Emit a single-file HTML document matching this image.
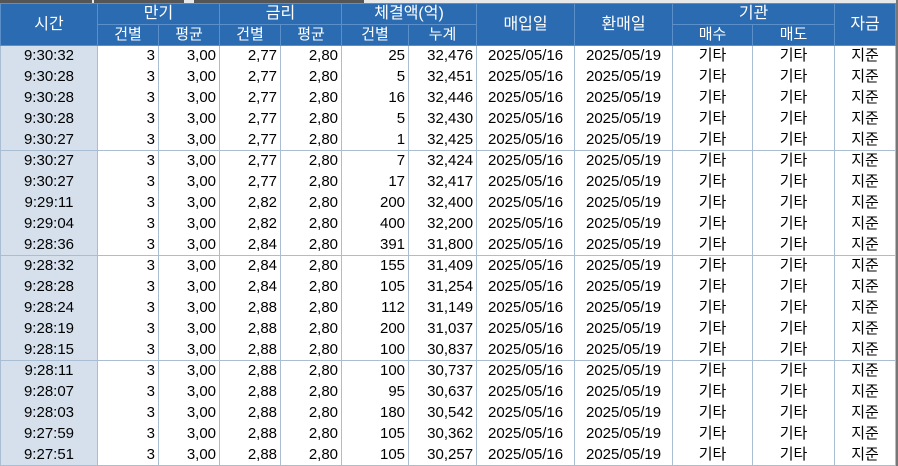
<!DOCTYPE html>
<html><head><meta charset="utf-8"><style>
*{margin:0;padding:0;box-sizing:border-box}
body{width:898px;height:466px;overflow:hidden;background:#fff;font-family:"Liberation Sans","Noto Sans CJK KR",sans-serif;font-size:15px;color:#000;position:relative}
.tabs{position:absolute;top:0;left:0;width:898px;height:3px;background:#e8e8e8}
.tabs span{position:absolute;top:0;height:3px;background:#555}
table{position:absolute;top:3px;left:0;border-collapse:collapse;table-layout:fixed;width:895px}
td,th{overflow:hidden;white-space:nowrap;line-height:20px;height:21px;padding:0 3px}
th{background:#2b6bb1;color:#fff;font-weight:normal;border:1px solid #5a8fca;font-size:15px;height:20px}
th.big{font-size:16px}
td{border-left:1px solid #a9bdd3;border-right:1px solid #a9bdd3;text-align:right}
td.t{background:#d5e0ec;text-align:center}
td.c{text-align:center}
tr.sep td{border-bottom:1px solid #a9bdd3}
.edge{position:absolute;right:0;top:0;width:2px;height:466px;background:#777}
</style></head><body>
<div class="tabs"><span style="left:0;width:92px"></span><span style="left:94px;width:90px"></span><span style="left:194px;width:170px"></span></div>
<table>
<colgroup><col style="width:97px"><col style="width:61px"><col style="width:61px"><col style="width:61px"><col style="width:61px"><col style="width:67px"><col style="width:68px"><col style="width:98px"><col style="width:98px"><col style="width:80px"><col style="width:82px"><col style="width:61px"></colgroup>
<tr><th rowspan="2" class="big">시간</th><th colspan="2" class="big">만기</th><th colspan="2" class="big">금리</th><th colspan="2" class="big">체결액(억)</th><th rowspan="2" class="big">매입일</th><th rowspan="2" class="big">환매일</th><th colspan="2" class="big">기관</th><th rowspan="2" class="big">자금</th></tr>
<tr><th>건별</th><th>평균</th><th>건별</th><th>평균</th><th>건별</th><th>누계</th><th>매수</th><th>매도</th></tr>
<tr><td class="t">9:30:32</td><td>3</td><td>3,00</td><td>2,77</td><td>2,80</td><td>25</td><td>32,476</td><td class="c">2025/05/16</td><td class="c">2025/05/19</td><td class="c">기타</td><td class="c">기타</td><td class="c">지준</td></tr>
<tr><td class="t">9:30:28</td><td>3</td><td>3,00</td><td>2,77</td><td>2,80</td><td>5</td><td>32,451</td><td class="c">2025/05/16</td><td class="c">2025/05/19</td><td class="c">기타</td><td class="c">기타</td><td class="c">지준</td></tr>
<tr><td class="t">9:30:28</td><td>3</td><td>3,00</td><td>2,77</td><td>2,80</td><td>16</td><td>32,446</td><td class="c">2025/05/16</td><td class="c">2025/05/19</td><td class="c">기타</td><td class="c">기타</td><td class="c">지준</td></tr>
<tr><td class="t">9:30:28</td><td>3</td><td>3,00</td><td>2,77</td><td>2,80</td><td>5</td><td>32,430</td><td class="c">2025/05/16</td><td class="c">2025/05/19</td><td class="c">기타</td><td class="c">기타</td><td class="c">지준</td></tr>
<tr class="sep"><td class="t">9:30:27</td><td>3</td><td>3,00</td><td>2,77</td><td>2,80</td><td>1</td><td>32,425</td><td class="c">2025/05/16</td><td class="c">2025/05/19</td><td class="c">기타</td><td class="c">기타</td><td class="c">지준</td></tr>
<tr><td class="t">9:30:27</td><td>3</td><td>3,00</td><td>2,77</td><td>2,80</td><td>7</td><td>32,424</td><td class="c">2025/05/16</td><td class="c">2025/05/19</td><td class="c">기타</td><td class="c">기타</td><td class="c">지준</td></tr>
<tr><td class="t">9:30:27</td><td>3</td><td>3,00</td><td>2,77</td><td>2,80</td><td>17</td><td>32,417</td><td class="c">2025/05/16</td><td class="c">2025/05/19</td><td class="c">기타</td><td class="c">기타</td><td class="c">지준</td></tr>
<tr><td class="t">9:29:11</td><td>3</td><td>3,00</td><td>2,82</td><td>2,80</td><td>200</td><td>32,400</td><td class="c">2025/05/16</td><td class="c">2025/05/19</td><td class="c">기타</td><td class="c">기타</td><td class="c">지준</td></tr>
<tr><td class="t">9:29:04</td><td>3</td><td>3,00</td><td>2,82</td><td>2,80</td><td>400</td><td>32,200</td><td class="c">2025/05/16</td><td class="c">2025/05/19</td><td class="c">기타</td><td class="c">기타</td><td class="c">지준</td></tr>
<tr class="sep"><td class="t">9:28:36</td><td>3</td><td>3,00</td><td>2,84</td><td>2,80</td><td>391</td><td>31,800</td><td class="c">2025/05/16</td><td class="c">2025/05/19</td><td class="c">기타</td><td class="c">기타</td><td class="c">지준</td></tr>
<tr><td class="t">9:28:32</td><td>3</td><td>3,00</td><td>2,84</td><td>2,80</td><td>155</td><td>31,409</td><td class="c">2025/05/16</td><td class="c">2025/05/19</td><td class="c">기타</td><td class="c">기타</td><td class="c">지준</td></tr>
<tr><td class="t">9:28:28</td><td>3</td><td>3,00</td><td>2,84</td><td>2,80</td><td>105</td><td>31,254</td><td class="c">2025/05/16</td><td class="c">2025/05/19</td><td class="c">기타</td><td class="c">기타</td><td class="c">지준</td></tr>
<tr><td class="t">9:28:24</td><td>3</td><td>3,00</td><td>2,88</td><td>2,80</td><td>112</td><td>31,149</td><td class="c">2025/05/16</td><td class="c">2025/05/19</td><td class="c">기타</td><td class="c">기타</td><td class="c">지준</td></tr>
<tr><td class="t">9:28:19</td><td>3</td><td>3,00</td><td>2,88</td><td>2,80</td><td>200</td><td>31,037</td><td class="c">2025/05/16</td><td class="c">2025/05/19</td><td class="c">기타</td><td class="c">기타</td><td class="c">지준</td></tr>
<tr class="sep"><td class="t">9:28:15</td><td>3</td><td>3,00</td><td>2,88</td><td>2,80</td><td>100</td><td>30,837</td><td class="c">2025/05/16</td><td class="c">2025/05/19</td><td class="c">기타</td><td class="c">기타</td><td class="c">지준</td></tr>
<tr><td class="t">9:28:11</td><td>3</td><td>3,00</td><td>2,88</td><td>2,80</td><td>100</td><td>30,737</td><td class="c">2025/05/16</td><td class="c">2025/05/19</td><td class="c">기타</td><td class="c">기타</td><td class="c">지준</td></tr>
<tr><td class="t">9:28:07</td><td>3</td><td>3,00</td><td>2,88</td><td>2,80</td><td>95</td><td>30,637</td><td class="c">2025/05/16</td><td class="c">2025/05/19</td><td class="c">기타</td><td class="c">기타</td><td class="c">지준</td></tr>
<tr><td class="t">9:28:03</td><td>3</td><td>3,00</td><td>2,88</td><td>2,80</td><td>180</td><td>30,542</td><td class="c">2025/05/16</td><td class="c">2025/05/19</td><td class="c">기타</td><td class="c">기타</td><td class="c">지준</td></tr>
<tr><td class="t">9:27:59</td><td>3</td><td>3,00</td><td>2,88</td><td>2,80</td><td>105</td><td>30,362</td><td class="c">2025/05/16</td><td class="c">2025/05/19</td><td class="c">기타</td><td class="c">기타</td><td class="c">지준</td></tr>
<tr class="sep"><td class="t">9:27:51</td><td>3</td><td>3,00</td><td>2,88</td><td>2,80</td><td>105</td><td>30,257</td><td class="c">2025/05/16</td><td class="c">2025/05/19</td><td class="c">기타</td><td class="c">기타</td><td class="c">지준</td></tr>
</table>
<div class="edge"></div>
</body></html>
